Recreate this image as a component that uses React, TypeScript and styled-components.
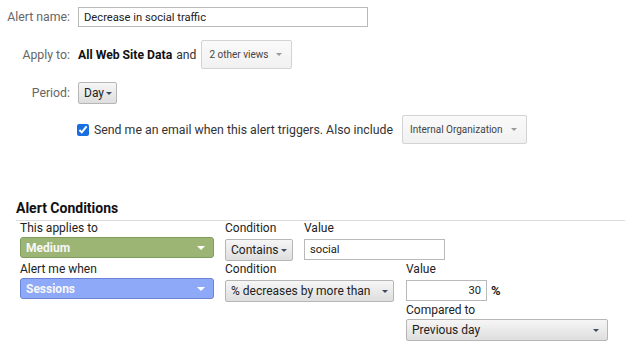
import styled, { createGlobalStyle } from 'styled-components';

const GlobalStyle = createGlobalStyle`
  html, body {
    margin: 0;
    padding: 0;
    background: #fff;
    font-family: Roboto, "Liberation Sans", Arial, sans-serif;
    color: #222;
  }
`;

const Page = styled.div`
  width: 625px;
  height: 349px;
  overflow: hidden;
  padding-top: 7px;
  box-sizing: border-box;
`;

const FormRow = styled.div<{ $top: number; $h: number }>`
  display: flex;
  align-items: center;
  margin-top: ${(p) => p.$top}px;
  height: ${(p) => p.$h}px;
`;

const FieldLabel = styled.div`
  width: 70px;
  margin-right: 8px;
  text-align: right;
  font-size: 12.3px;
  color: #666;
`;

const TextInput = styled.div<{ $w: number; $h: number; $right?: boolean }>`
  box-sizing: border-box;
  width: ${(p) => p.$w}px;
  height: ${(p) => p.$h}px;
  border: 1px solid #b9b9b9;
  background: #fff;
  display: flex;
  align-items: center;
  justify-content: ${(p) => (p.$right ? 'flex-end' : 'flex-start')};
  padding: 0 5px;
  font-size: 11.2px;
  color: #222;
`;

const Strong = styled.span`
  font-weight: bold;
  font-size: 12.2px;
  color: #111;
`;

const Plain = styled.span`
  font-size: 12.2px;
  color: #333;
  margin: 0 5px 0 4px;
`;

const LightSelect = styled.div<{ $w: number }>`
  box-sizing: border-box;
  width: ${(p) => p.$w}px;
  height: 29px;
  border: 1px solid #d3d3d3;
  border-radius: 2px;
  background: linear-gradient(#fafafa, #f1f1f1);
  display: flex;
  align-items: center;
  justify-content: space-between;
  padding: 0 9px 0 7px;
  font-size: 10px;
  white-space: nowrap;
  color: #444;
`;

const Caret = styled.span<{ $c: string; $s?: number }>`
  width: 0;
  height: 0;
  border-left: ${(p) => p.$s ?? 3.5}px solid transparent;
  border-right: ${(p) => p.$s ?? 3.5}px solid transparent;
  border-top: ${(p) => p.$s ?? 3.5}px solid ${(p) => p.$c};
  display: inline-block;
  flex: none;
`;

const Button = styled.div<{ $w: number; $h: number; $mt?: number; $pr?: number }>`
  box-sizing: border-box;
  width: ${(p) => p.$w}px;
  height: ${(p) => p.$h}px;
  margin-top: ${(p) => p.$mt ?? 0}px;
  border: 1px solid #b6b6b6;
  border-radius: 2px;
  background: linear-gradient(#f6f6f6, #dedede);
  display: flex;
  align-items: center;
  justify-content: space-between;
  padding: 0 ${(p) => p.$pr ?? 5}px 0 5px;
  font-size: 12px;
  white-space: nowrap;
  color: #222;
`;

const CheckRow = styled.div`
  display: flex;
  align-items: center;
  margin-left: 77px;
  gap: 4px;
`;

const Check = styled.input`
  margin: 0 1px 0 0;
  width: 12px;
  height: 12px;
  accent-color: #1a6fe0;
`;

const CheckText = styled.span`
  font-size: 12.3px;
  color: #333;
  margin-right: 5px;
`;

const Heading = styled.div`
  margin: 55px 0 0 16px;
  font-size: 14px;
  font-weight: bold;
  line-height: 18px;
  padding-bottom: 3px;
  border-bottom: 1px solid #dcdcdc;
  color: #111;
`;

const CondRow = styled.div<{ $mt?: number }>`
  display: flex;
  margin: ${(p) => p.$mt ?? 0}px 0 0 20px;
  gap: 11px;
`;

const Group = styled.div<{ $ml?: number }>`
  display: flex;
  flex-direction: column;
  margin-left: ${(p) => p.$ml ?? 0}px;
`;

const GroupLabel = styled.div<{ $mt?: number }>`
  font-size: 12px;
  line-height: 15px;
  margin-top: ${(p) => p.$mt ?? 0}px;
  color: #222;
`;

const DimBar = styled.div<{ $bg: string; $bd: string }>`
  box-sizing: border-box;
  width: 194px;
  height: 21px;
  margin-top: 1px;
  background: ${(p) => p.$bg};
  border: 1px solid ${(p) => p.$bd};
  border-radius: 3px;
  display: flex;
  align-items: center;
  justify-content: space-between;
  padding: 0 8px 0 5px;
  color: #f8f8f8;
  font-weight: bold;
  font-size: 12px;
`;

const InputLine = styled.div`
  display: flex;
  align-items: center;
  gap: 4px;
  margin-top: 3px;
`;

const Percent = styled.span`
  font-size: 13px;
  font-weight: bold;
  color: #222;
`;

export default function App() {
  return (
    <Page>
      <GlobalStyle />
      <FormRow $top={0} $h={20}>
        <FieldLabel>Alert name:</FieldLabel>
        <TextInput $w={290} $h={20}>Decrease in social traffic</TextInput>
      </FormRow>
      <FormRow $top={13} $h={29}>
        <FieldLabel>Apply to:</FieldLabel>
        <Strong>All Web Site Data</Strong>
        <Plain>and</Plain>
        <LightSelect $w={91}>
          2 other views <Caret $c="#999" $s={3.5} />
        </LightSelect>
      </FormRow>
      <FormRow $top={13} $h={22}>
        <FieldLabel>Period:</FieldLabel>
        <Button $w={39} $h={22} $pr={4}>
          Day <Caret $c="#3f4b63" $s={3.5} />
        </Button>
      </FormRow>
      <FormRow $top={11} $h={29}>
        <CheckRow>
          <Check type="checkbox" checked readOnly />
          <CheckText>Send me an email when this alert triggers. Also include</CheckText>
          <LightSelect $w={125}>
            Internal Organization <Caret $c="#999" $s={3.5} />
          </LightSelect>
        </CheckRow>
      </FormRow>

      <Heading>Alert Conditions</Heading>

      <CondRow>
        <Group>
          <GroupLabel>This applies to</GroupLabel>
          <DimBar $bg="#9db574" $bd="#7f9b5d">
            Medium <Caret $c="#fff" $s={4.5} />
          </DimBar>
        </Group>
        <Group>
          <GroupLabel>Condition</GroupLabel>
          <Button $w={68} $h={22} $mt={3}>
            Contains <Caret $c="#3f4b63" $s={3.5} />
          </Button>
        </Group>
        <Group>
          <GroupLabel>Value</GroupLabel>
          <InputLine>
            <TextInput $w={141} $h={21}>social</TextInput>
          </InputLine>
        </Group>
      </CondRow>

      <CondRow $mt={1}>
        <Group>
          <GroupLabel>Alert me when</GroupLabel>
          <DimBar $bg="#8ea9f7" $bd="#6b84d6">
            Sessions <Caret $c="#fff" $s={4.5} />
          </DimBar>
        </Group>
        <Group>
          <GroupLabel>Condition</GroupLabel>
          <Button $w={169} $h={22} $mt={3} $pr={5}>
            % decreases by more than <Caret $c="#3f4b63" $s={3.5} />
          </Button>
        </Group>
        <Group $ml={1}>
          <GroupLabel>Value</GroupLabel>
          <InputLine>
            <TextInput $w={81} $h={21} $right>
              30
            </TextInput>
            <Percent>%</Percent>
          </InputLine>
          <GroupLabel $mt={2}>Compared to</GroupLabel>
          <Button $w={202} $h={22} $mt={1} $pr={8}>
            Previous day <Caret $c="#3f4b63" $s={3.5} />
          </Button>
        </Group>
      </CondRow>
    </Page>
  );
}
